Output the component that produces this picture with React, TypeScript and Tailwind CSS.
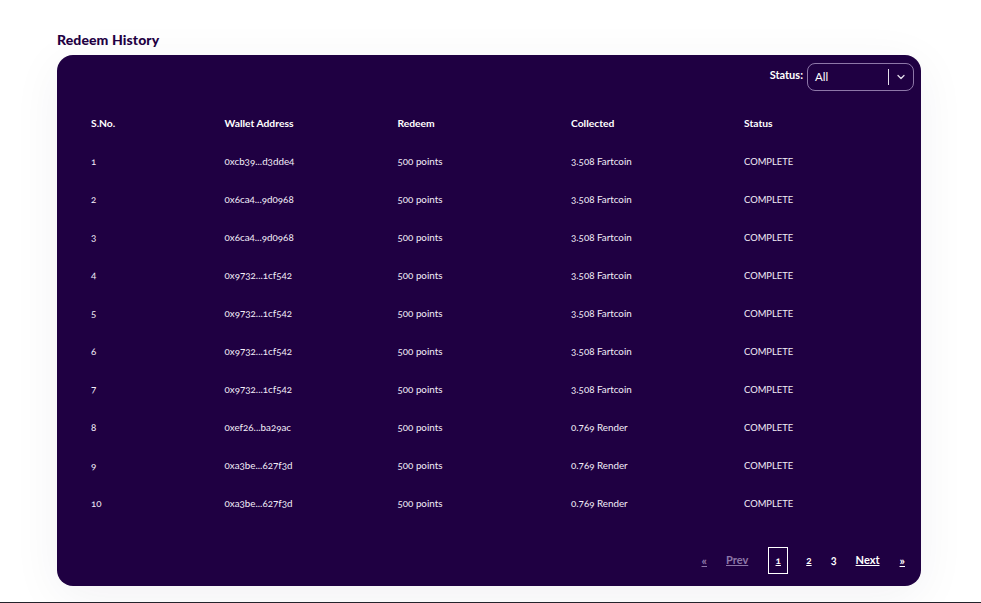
import { ChevronDown } from 'lucide-react';

const rows = [
  { id: 1, wallet: '0xcb39...d3dde4', collected: '3.508 Fartcoin' },
  { id: 2, wallet: '0x6ca4...9d0968', collected: '3.508 Fartcoin' },
  { id: 3, wallet: '0x6ca4...9d0968', collected: '3.508 Fartcoin' },
  { id: 4, wallet: '0x9732...1cf542', collected: '3.508 Fartcoin' },
  { id: 5, wallet: '0x9732...1cf542', collected: '3.508 Fartcoin' },
  { id: 6, wallet: '0x9732...1cf542', collected: '3.508 Fartcoin' },
  { id: 7, wallet: '0x9732...1cf542', collected: '3.508 Fartcoin' },
  { id: 8, wallet: '0xef26...ba29ac', collected: '0.769 Render' },
  { id: 9, wallet: '0xa3be...627f3d', collected: '0.769 Render' },
  { id: 10, wallet: '0xa3be...627f3d', collected: '0.769 Render' },
];

const th = 'h-[38px] p-0 text-left text-[10.3px] font-bold text-white';
const td = 'h-[38px] p-0 pb-[2px] text-[#f3eef8]';

export default function App() {
  return (
    <div className="h-[603px] w-[981px] overflow-hidden bg-white font-['Lato','Open_Sans',sans-serif] [font-variant-numeric:oldstyle-nums]">
      <div className="h-[602px] px-[57px] pt-[31px]">
        <h2 className="mb-[7px] h-[17px] text-[14px] leading-[17px] font-black tracking-[0.1px] text-[#1f0042]">Redeem History</h2>
        <div className="h-[531px] w-[864px] rounded-[16px] bg-[#1f0042] shadow-[0_10px_50px_rgba(31,0,66,0.06)]">
          <div className="flex h-[42px] items-center justify-end gap-[4px] pt-[1px] pr-[7px]">
            <span className="mb-[2px] text-[11px] font-bold text-white">Status:</span>
            <div className="flex h-[28px] w-[107px] items-center rounded-[8px] border border-[#8d77a8] pl-[7px] text-[11.5px] text-white">
              <span className="flex-1">All</span>
              <span className="h-[16px] w-px bg-[#e4deeb]" />
              <span className="flex w-[24px] justify-center">
                <ChevronDown size={12} strokeWidth={2.5} className="text-[#e4deeb]" />
              </span>
            </div>
          </div>
          <div className="mt-[8px] pl-[34px]">
            <table className="w-[830px] table-fixed border-collapse">
              <thead>
                <tr>
                  <th className={`${th} w-[133.5px]`}>S.No.</th>
                  <th className={`${th} w-[173px]`}>Wallet Address</th>
                  <th className={`${th} w-[173.5px]`}>Redeem</th>
                  <th className={`${th} w-[173px]`}>Collected</th>
                  <th className={th}>Status</th>
                </tr>
              </thead>
              <tbody className="text-[9.8px]">
                {rows.map((r) => (
                  <tr key={r.id}>
                    <td className={td}>{r.id}</td>
                    <td className={td}>{r.wallet}</td>
                    <td className={td}>500 points</td>
                    <td className={td}>{r.collected}</td>
                    <td className="h-[38px] p-0 text-[9.4px] text-[#f3eef8]">COMPLETE</td>
                  </tr>
                ))}
              </tbody>
            </table>
          </div>
          <div className="mt-[24px] flex h-[27px] items-center justify-end pr-[16px] text-[11px] font-bold text-white">
            <a className="mr-[19px] text-[12px] text-[#8d77a8] underline">«</a>
            <a className="mr-[20px] text-[#8d77a8] underline">Prev</a>
            <a className="mr-[18px] flex h-[27px] w-[20px] items-center justify-center border border-white text-[10px] underline">1</a>
            <a className="mr-[19px] text-[10px] underline">2</a>
            <span className="mr-[19px] text-[11px]">3</span>
            <a className="mr-[20px] underline">Next</a>
            <a className="text-[12px] underline">»</a>
          </div>
        </div>
      </div>
      <div className="h-px bg-[#23232b]" />
    </div>
  );
}
